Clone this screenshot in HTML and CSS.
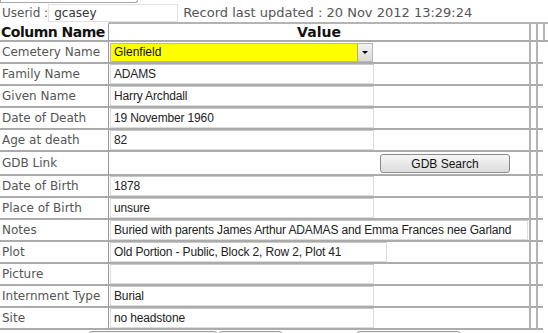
FILE: index.html
```html
<!DOCTYPE html>
<html lang="en">
<head>
  <meta charset="UTF-8">
  <title>Burial Record</title>
  <link rel="stylesheet" href="styles.css">
</head>
<body>

<div class="stub"></div>

<div class="userbar">
  <span class="lbl">Userid :</span>
  <input type="text" class="userid" value="gcasey">
  <span class="updated">Record last updated : 20 Nov 2012 13:29:24</span>
</div>

<table class="grid">
  <colgroup>
    <col class="c-name">
    <col class="c-value">
    <col class="c-gap">
    <col class="c-gap">
    <col class="c-tail">
  </colgroup>
  <thead>
    <tr>
      <th class="name">Column Name</th>
      <th class="value">Value</th>
      <th class="gap"></th>
      <th class="gap"></th>
      <th class="tail"></th>
    </tr>
  </thead>
  <tbody>
    <tr>
      <td class="name">Cemetery Name</td>
      <td class="value">
        <div class="select">
          <span class="select-text">Glenfield</span>
          <span class="select-btn"><span class="caret"></span></span>
        </div>
      </td>
      <td class="gap"></td><td class="gap"></td><td class="tail"></td>
    </tr>
    <tr>
      <td class="name">Family Name</td>
      <td class="value"><input type="text" class="field" value="ADAMS"></td>
      <td class="gap"></td><td class="gap"></td><td class="tail"></td>
    </tr>
    <tr>
      <td class="name">Given Name</td>
      <td class="value"><input type="text" class="field" value="Harry Archdall"></td>
      <td class="gap"></td><td class="gap"></td><td class="tail"></td>
    </tr>
    <tr>
      <td class="name">Date of Death</td>
      <td class="value"><input type="text" class="field" value="19 November 1960"></td>
      <td class="gap"></td><td class="gap"></td><td class="tail"></td>
    </tr>
    <tr>
      <td class="name">Age at death</td>
      <td class="value"><input type="text" class="field" value="82"></td>
      <td class="gap"></td><td class="gap"></td><td class="tail"></td>
    </tr>
    <tr class="tall">
      <td class="name">GDB Link</td>
      <td class="value"><button class="gdb-btn">GDB Search</button></td>
      <td class="gap"></td><td class="gap"></td><td class="tail"></td>
    </tr>
    <tr>
      <td class="name">Date of Birth</td>
      <td class="value"><input type="text" class="field" value="1878"></td>
      <td class="gap"></td><td class="gap"></td><td class="tail"></td>
    </tr>
    <tr>
      <td class="name">Place of Birth</td>
      <td class="value"><input type="text" class="field" value="unsure"></td>
      <td class="gap"></td><td class="gap"></td><td class="tail"></td>
    </tr>
    <tr>
      <td class="name">Notes</td>
      <td class="value"><input type="text" class="field wide" value="Buried with parents James Arthur ADAMAS and Emma Frances nee Garland"></td>
      <td class="gap"></td><td class="gap"></td><td class="tail"></td>
    </tr>
    <tr>
      <td class="name">Plot</td>
      <td class="value"><input type="text" class="field mid" value="Old Portion - Public, Block 2, Row 2, Plot 41"></td>
      <td class="gap"></td><td class="gap"></td><td class="tail"></td>
    </tr>
    <tr>
      <td class="name">Picture</td>
      <td class="value"><input type="text" class="field" value=""></td>
      <td class="gap"></td><td class="gap"></td><td class="tail"></td>
    </tr>
    <tr>
      <td class="name">Internment Type</td>
      <td class="value"><input type="text" class="field" value="Burial"></td>
      <td class="gap"></td><td class="gap"></td><td class="tail"></td>
    </tr>
    <tr>
      <td class="name">Site</td>
      <td class="value"><input type="text" class="field" value="no headstone"></td>
      <td class="gap"></td><td class="gap"></td><td class="tail"></td>
    </tr>
  </tbody>
</table>

<div class="actions">
  <span class="act act-save"></span>
  <span class="act act-next"></span>
  <span class="act act-back"></span>
</div>

</body>
</html>
```

FILE: styles.css
```css
* {
  box-sizing: border-box;
}

body {
  margin: 0;
  width: 548px;
  overflow: hidden;
  background: #fff;
  font-family: "DejaVu Sans", Verdana, sans-serif;
  font-size: 12px;
  color: #555;
}

.stub {
  width: 138px;
  height: 3px;
  border: 1px solid #a8a8a8;
  border-top: none;
  border-radius: 0 0 4px 0;
}

.userbar {
  display: flex;
  align-items: center;
  height: 19px;
  padding-left: 2px;
  white-space: nowrap;
}

.userid {
  margin: 0;
  width: 130px;
  height: 18px;
  padding: 0 0 0 5px;
  border: 1px solid #e2e2e2;
  font-family: "DejaVu Sans", Verdana, sans-serif;
  font-size: 12px;
  color: #333;
}

.updated {
  margin-left: 5px;
  font-size: 13px;
}

/* main record table */
.grid {
  width: 548px;
  table-layout: fixed;
  border-collapse: separate;
  border-spacing: 0;
}

.c-name { width: 109px; }
.c-value { width: 420px; }
.c-gap { width: 7px; }
.c-tail { width: 5px; }

.grid th, .grid td {
  padding: 0;
  border-bottom: 2px solid #ababab;
}

.grid th {
  height: 20px;
  font-size: 14px;
  font-weight: bold;
  color: #111;
  border-top: 2px solid #b4b4b4;
  line-height: 16px;
  white-space: nowrap;
}

.grid th.name {
  text-align: left;
  padding-left: 1px;
  letter-spacing: -0.5px;
  border-top-color: transparent;
  border-right: 1px solid #999;
  overflow: hidden;
}

.grid th.value {
  text-align: center;
}

.grid th.gap, .grid th.tail {
  border-left: 2px solid #b4b4b4;
}

.grid td {
  height: 22px;
}

.grid tr.tall td {
  height: 24px;
}

.grid td.name {
  padding-left: 2px;
  border-right: 1px solid #999;
  white-space: nowrap;
}

.grid td.value {
  padding-left: 1px;
}

.grid td.gap {
  border-left: 2px solid #b4b4b4;
}

.grid td.tail {
  border-bottom: none;
}

.field {
  display: block;
  width: 264px;
  height: 20px;
  margin: 0;
  padding: 0 0 0 3px;
  border: 1px solid #dcdcdc;
  border-top-color: #c8c8c8;
  font-family: "Liberation Sans", Arial, sans-serif;
  font-size: 12px;
  letter-spacing: -0.15px;
  color: #222;
  background: #fff;
}

.field.wide {
  width: 418px;
}

.field.mid {
  width: 277px;
}

.select {
  display: flex;
  width: 263px;
  height: 19px;
  border: 1px solid #b8b8b8;
}

.select-text {
  flex: 1;
  background: #ffff00;
  padding-left: 3px;
  line-height: 17px;
  font-family: "Liberation Sans", Arial, sans-serif;
  font-size: 12px;
  color: #111;
}

.select-btn {
  width: 15px;
  display: flex;
  align-items: center;
  justify-content: center;
  background: linear-gradient(#f4f4f4, #d9d9d9);
  border-left: 1px solid #a8a8a8;
}

.caret {
  width: 0;
  height: 0;
  border-left: 3px solid transparent;
  border-right: 3px solid transparent;
  border-top: 3px solid #000;
}

.gdb-btn {
  display: block;
  margin: 1px 0 0 270px;
  width: 130px;
  height: 19px;
  padding: 0;
  border: 1px solid #8a8a8a;
  border-radius: 3px;
  background: linear-gradient(#f6f6f6, #dcdcdc);
  font-family: "Liberation Sans", Arial, sans-serif;
  font-size: 12px;
  color: #111;
}

/* buttons under the table, mostly off screen */
.actions {
  display: flex;
  margin-top: 1px;
  padding-left: 88px;
}

.act {
  display: block;
  height: 22px;
  border: 1px solid #9a9a9a;
  border-radius: 4px;
  background: linear-gradient(#f6f6f6, #dcdcdc);
}

.act-save { width: 130px; }
.act-next { width: 65px; }
.act-back { width: 105px; margin-left: 73px; }
```
